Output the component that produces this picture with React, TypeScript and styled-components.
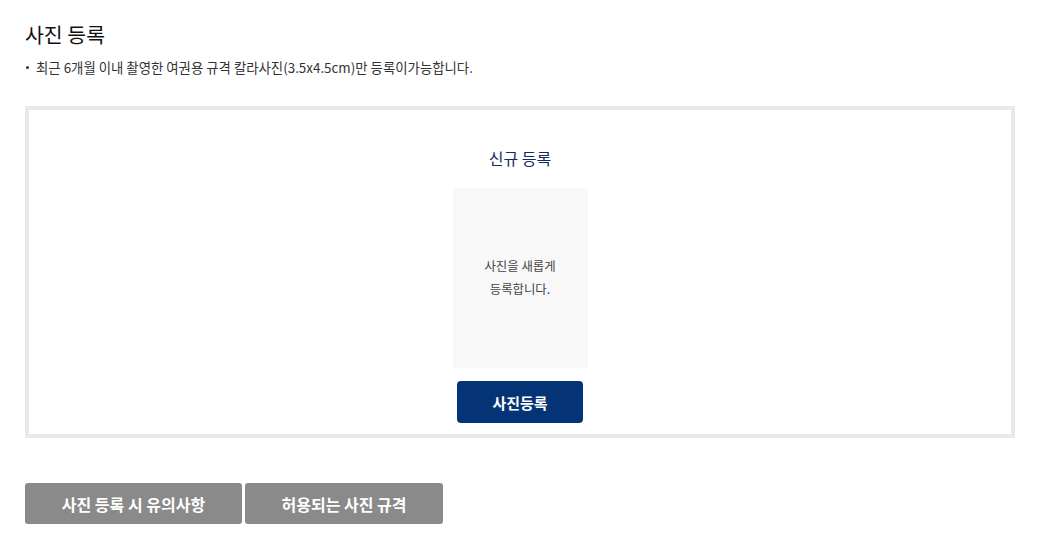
import React from "react";
import styled, { createGlobalStyle } from "styled-components";

const GlobalStyle = createGlobalStyle`
  body {
    margin: 0;
    background: #fff;
    font-family: "Noto Sans CJK KR", "Noto Sans", sans-serif;
    color: #222;
  }
`;

const Page = styled.div`
  width: 990px;
  padding: 20px 0 0 25px;
`;

const Title = styled.h2`
  margin: 0;
  font-size: 20.5px;
  font-weight: 400;
  line-height: 28px;
  color: #111;
`;

const NoticeList = styled.ul`
  margin: 10px 0 0;
  padding: 0;
  list-style: none;
`;

const NoticeItem = styled.li`
  position: relative;
  padding-left: 11px;
  font-size: 13.4px;
  line-height: 18px;
  color: #333;

  &::before {
    content: "";
    position: absolute;
    left: 1px;
    top: 8px;
    width: 3px;
    height: 3px;
    border-radius: 50%;
    background: #333;
  }
`;

const RegisterBox = styled.section`
  margin-top: 30px;
  border: 4px solid #e9e9e9;
  display: flex;
  flex-direction: column;
  align-items: center;
  padding: 36px 0 11px;
`;

const BoxTitle = styled.h3`
  margin: 0;
  font-size: 16px;
  font-weight: 400;
  line-height: 24px;
  color: #0f2d5c;
`;

const PhotoSlot = styled.div`
  margin-top: 18px;
  width: 135px;
  height: 180px;
  background: #f8f8f8;
  display: flex;
  align-items: center;
  justify-content: center;
  text-align: center;
  font-size: 12.4px;
  line-height: 23px;
  color: #444;
`;

const PrimaryButton = styled.button`
  margin-top: 13px;
  width: 126px;
  height: 42px;
  border: none;
  border-radius: 4px;
  background: #043475;
  color: #fff;
  font-family: inherit;
  font-size: 15px;
  font-weight: 700;
  cursor: pointer;
`;

const ButtonRow = styled.div`
  margin-top: 45px;
  display: flex;
  gap: 3px;
`;

const GrayButton = styled.button<{ $width: number }>`
  width: ${({ $width }) => $width}px;
  height: 41px;
  border: none;
  border-radius: 3px;
  background: #8a8a8a;
  color: #fff;
  font-family: inherit;
  font-size: 16px;
  font-weight: 700;
  cursor: pointer;
`;

const App = () => (
  <>
    <GlobalStyle />
    <Page>
      <Title>사진 등록</Title>
      <NoticeList>
        <NoticeItem>
          최근 6개월 이내 촬영한 여권용 규격 칼라사진(3.5x4.5cm)만 등록이가능합니다.
        </NoticeItem>
      </NoticeList>
      <RegisterBox>
        <BoxTitle>신규 등록</BoxTitle>
        <PhotoSlot>
          사진을 새롭게
          <br />
          등록합니다.
        </PhotoSlot>
        <PrimaryButton>사진등록</PrimaryButton>
      </RegisterBox>
      <ButtonRow>
        <GrayButton $width={217}>사진 등록 시 유의사항</GrayButton>
        <GrayButton $width={198}>허용되는 사진 규격</GrayButton>
      </ButtonRow>
    </Page>
  </>
);

export default App;
